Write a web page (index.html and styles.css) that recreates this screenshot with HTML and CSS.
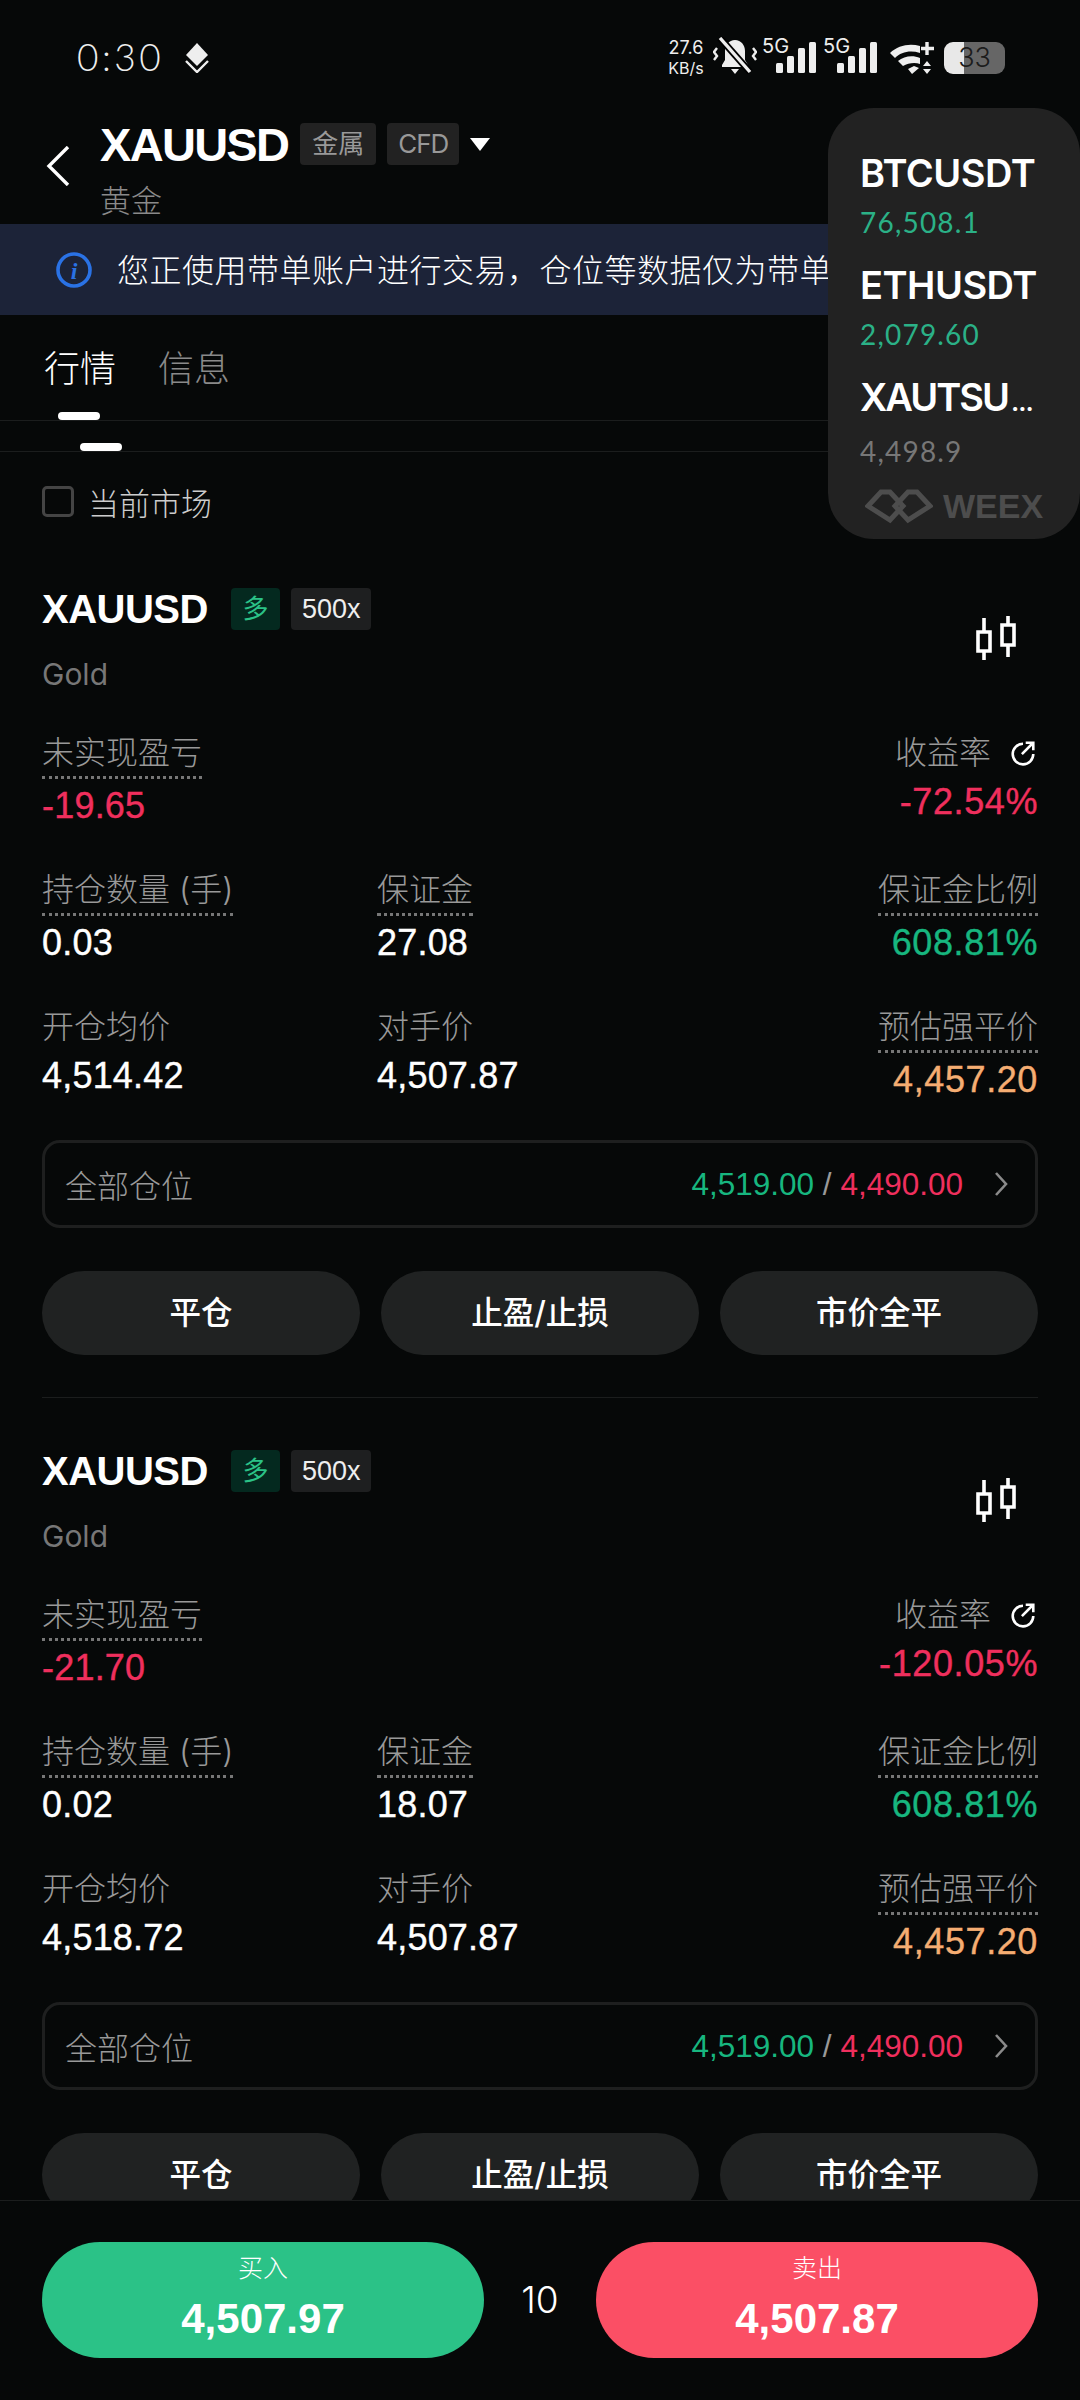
FILE: index.html
```html
<!DOCTYPE html>
<html lang="zh-CN">
<head>
  <meta charset="UTF-8">
  <meta name="viewport" content="width=device-width, initial-scale=1.0">
  <title>XAUUSD</title>
  <link rel="stylesheet" href="styles.css">
</head>
<body>

<svg class="defs" width="0" height="0">
  <symbol id="candles" viewBox="0 0 40 44">
    <path d="M2 16h12v19H2zM8 2v14M8 35v9M26 9h12v20H26zM32 0v9M32 29v12" fill="none" stroke="#fff" stroke-width="3.6"/>
  </symbol>
  <symbol id="share" viewBox="0 0 24 24">
    <path d="M12 3.500a9.500 9.500 0 1 0 9.500 9.500" fill="none" stroke="#fff" stroke-width="2.4"/>
    <path d="M11 13 20.500 3.500M14.500 2.500h7v7" fill="none" stroke="#fff" stroke-width="2.4"/>
  </symbol>
  <symbol id="chev" viewBox="0 0 14 24">
    <path d="M2 1l10 11L2 23" fill="none" stroke="#8a8a8a" stroke-width="2.6"/>
  </symbol>
  <symbol id="signal" viewBox="0 0 40 31">
    <rect x="0" y="21" width="7" height="10" rx="1.5" fill="#eee"/>
    <rect x="11" y="14" width="7" height="17" rx="1.5" fill="#eee"/>
    <rect x="22" y="6" width="7" height="25" rx="1.5" fill="#eee"/>
    <rect x="33" y="0" width="7" height="31" rx="1.5" fill="#eee"/>
  </symbol>
</svg>

<div class="status">
  <div class="status-left">
    <span class="time">0:30</span>
    <svg class="layers" viewBox="0 0 26 30">
      <path d="M13 0l11 12-11 11L2 12z" fill="#eee"/>
      <path d="M2 18l11 11 11-11" fill="none" stroke="#eee" stroke-width="2.4"/>
    </svg>
  </div>
  <div class="status-right">
    <div class="speed"><span>27.6</span><span class="unit">KB/s</span></div>
    <svg class="bell" viewBox="0 0 44 38">
      <path d="M22 3c-6 0-10 5-10 11v9l-3 5v2h26v-2l-3-5v-9c0-6-4-11-10-11zM18 32h8l-4 5z" fill="#eee"/>
      <path d="M7 1l30 34" stroke="#000" stroke-width="7"/>
      <path d="M7 1l30 34" stroke="#eee" stroke-width="3.4"/>
      <path d="M4 11l-3 4 3 4-3 4M40 11l3 4-3 4 3 4" fill="none" stroke="#eee" stroke-width="2.4"/>
    </svg>
    <div class="sim"><span class="five-g">5G</span><svg class="bars"><use href="#signal"/></svg></div>
    <div class="sim sim-two"><span class="five-g">5G</span><svg class="bars"><use href="#signal"/></svg></div>
    <svg class="wifi" viewBox="0 0 44 32">
      <path d="M0 11C8 3 20 1 30 4v7C20 8 11 10 5 16zM8 19c6-5 15-6 22-3v6c-5-2-12-1-17 2zM18 27l6-3 5 2-7 6z" fill="#eee"/>
      <path d="M37 0v13M31 6.500h13" stroke="#eee" stroke-width="3.4"/>
      <path d="M37 19l4 5h-8zM37 32l4-5h-8z" fill="#eee"/>
    </svg>
    <div class="battery"><span class="battery-num">33</span></div>
  </div>
</div>

<div class="header">
  <svg class="back" viewBox="0 0 24 40"><path d="M22 1L3 20l19 19" fill="none" stroke="#fff" stroke-width="3.4"/></svg>
  <div class="title-block">
    <div class="title-row">
      <span class="title">XAUUSD</span>
      <span class="head-tag">金属</span>
      <span class="head-tag head-latin">CFD</span>
      <span class="caret"></span>
    </div>
    <div class="subtitle">黄金</div>
  </div>
</div>

<div class="banner">
  <svg class="info" viewBox="0 0 36 36">
    <circle cx="18" cy="18" r="16" fill="none" stroke="#2a72e5" stroke-width="3.6"/>
    <text x="18" y="27" text-anchor="middle" class="info-i">i</text>
  </svg>
  <span class="banner-text">您正使用带单账户进行交易，仓位等数据仅为带单</span>
</div>

<div class="tabs">
  <div class="tab tab-on">行情<i class="tab-mark"></i></div>
  <div class="tab">信息</div>
</div>
<div class="subtabs"><i class="subtab-mark"></i></div>

<div class="scroll">
  <label class="filter"><span class="checkbox"></span>当前市场</label>

  <div class="card">
    <div class="card-head">
      <div>
        <div class="card-title"><span class="symbol">XAUUSD</span><span class="tag tag-long">多</span><span class="tag">500x</span></div>
        <div class="gold">Gold</div>
      </div>
      <svg class="candles"><use href="#candles"/></svg>
    </div>
    <div class="grid">
      <div class="cell"><span class="label dotted">未实现盈亏</span><span class="value red">-19.65</span></div>
      <div class="cell cell-end"><span class="label">收益率<svg class="share"><use href="#share"/></svg></span><span class="value red">-72.54%</span></div>
      <div class="cell"><span class="label dotted">持仓数量 (手)</span><span class="value">0.03</span></div>
      <div class="cell"><span class="label dotted">保证金</span><span class="value">27.08</span></div>
      <div class="cell cell-end"><span class="label dotted">保证金比例</span><span class="value green">608.81%</span></div>
      <div class="cell"><span class="label">开仓均价</span><span class="value">4,514.42</span></div>
      <div class="cell"><span class="label">对手价</span><span class="value">4,507.87</span></div>
      <div class="cell cell-end"><span class="label dotted">预估强平价</span><span class="value orange">4,457.20</span></div>
    </div>
    <div class="all">
      <span class="all-label">全部仓位</span>
      <span class="all-prices"><span class="green">4,519.00</span> <span class="slash">/</span> <span class="red">4,490.00</span></span>
      <svg class="chev"><use href="#chev"/></svg>
    </div>
    <div class="actions">
      <div class="action">平仓</div>
      <div class="action">止盈/止损</div>
      <div class="action">市价全平</div>
    </div>
  </div>

  <div class="card">
    <div class="card-head">
      <div>
        <div class="card-title"><span class="symbol">XAUUSD</span><span class="tag tag-long">多</span><span class="tag">500x</span></div>
        <div class="gold">Gold</div>
      </div>
      <svg class="candles"><use href="#candles"/></svg>
    </div>
    <div class="grid">
      <div class="cell"><span class="label dotted">未实现盈亏</span><span class="value red">-21.70</span></div>
      <div class="cell cell-end"><span class="label">收益率<svg class="share"><use href="#share"/></svg></span><span class="value red">-120.05%</span></div>
      <div class="cell"><span class="label dotted">持仓数量 (手)</span><span class="value">0.02</span></div>
      <div class="cell"><span class="label dotted">保证金</span><span class="value">18.07</span></div>
      <div class="cell cell-end"><span class="label dotted">保证金比例</span><span class="value green">608.81%</span></div>
      <div class="cell"><span class="label">开仓均价</span><span class="value">4,518.72</span></div>
      <div class="cell"><span class="label">对手价</span><span class="value">4,507.87</span></div>
      <div class="cell cell-end"><span class="label dotted">预估强平价</span><span class="value orange">4,457.20</span></div>
    </div>
    <div class="all">
      <span class="all-label">全部仓位</span>
      <span class="all-prices"><span class="green">4,519.00</span> <span class="slash">/</span> <span class="red">4,490.00</span></span>
      <svg class="chev"><use href="#chev"/></svg>
    </div>
    <div class="actions">
      <div class="action">平仓</div>
      <div class="action">止盈/止损</div>
      <div class="action">市价全平</div>
    </div>
  </div>
</div>

<div class="footer">
  <div class="trade trade-buy"><span class="trade-label">买入</span><span class="trade-price">4,507.97</span></div>
  <div class="lever">10</div>
  <div class="trade trade-sell"><span class="trade-label">卖出</span><span class="trade-price">4,507.87</span></div>
</div>

<div class="float">
  <div class="float-item"><div class="float-name">BTCUSDT</div><div class="float-price up">76,508.1</div></div>
  <div class="float-item"><div class="float-name">ETHUSDT</div><div class="float-price up">2,079.60</div></div>
  <div class="float-item"><div class="float-name float-cut">XAUTSU<span class="dots">...</span></div><div class="float-price">4,498.9</div></div>
  <div class="weex">
    <svg class="weex-mark" viewBox="0 0 68 36">
      <path d="M16 4H25L38 18 25 32 3 18z" fill="none" stroke="#4d4d4d" stroke-width="5"/>
      <path d="M52 4H43L30 18 43 32 65 18z" fill="none" stroke="#4d4d4d" stroke-width="5"/>
    </svg>
    <span>WEEX</span>
  </div>
</div>

</body>
</html>
```

FILE: styles.css
```css
* {
  box-sizing: border-box;
}
html, body {
  margin: 0;
  padding: 0;
}
body {
  position: relative;
  width: 1080px;
  height: 2400px;
  overflow: hidden;
  display: flex;
  flex-direction: column;
  background-color: #060808;
  color: #fff;
  font-family: Inter, "Noto Sans CJK SC", sans-serif;
}
.defs {
  position: absolute;
}

/* status bar */
.status {
  height: 108px;
  flex: none;
  display: flex;
  justify-content: space-between;
  padding: 37px 75px 0 77px;
}
.status-left {
  display: flex;
  align-items: flex-start;
  gap: 20px;
}
.time {
  font-size: 37px;
  font-weight: 300;
  line-height: 40px;
  letter-spacing: 3.5px;
  color: #eee;
  font-family: Lato, sans-serif;
}
.layers {
  width: 26px;
  height: 30px;
  margin-top: 6px;
}
.status-right {
  display: flex;
  align-items: flex-start;
  height: 40px;
  color: #eee;
}
.speed {
  display: flex;
  flex-direction: column;
  align-items: center;
  font-size: 18px;
  line-height: 21px;
  width: 36px;
}
.unit {
  font-size: 16px;
}
.bell {
  width: 44px;
  height: 38px;
  margin-left: 9px;
}
.sim {
  position: relative;
  width: 54px;
  height: 36px;
  margin-left: 5px;
}
.sim-two {
  margin-left: 7px;
}
.five-g {
  position: absolute;
  left: 0;
  top: -1px;
  font-size: 20px;
  line-height: 20px;
}
.bars {
  position: absolute;
  left: 14px;
  top: 5px;
  width: 40px;
  height: 31px;
}
.wifi {
  width: 44px;
  height: 32px;
  margin: 5px 10px 0 13px;
}
.battery {
  width: 61px;
  height: 32px;
  margin-top: 5px;
  border-radius: 9px;
  background: linear-gradient(90deg, #e8e8e8 20px, #666 20px);
  text-align: center;
}
.battery-num {
  font-size: 27px;
  line-height: 32px;
  color: #1c1c1c;
  font-weight: 300;
}

/* header */
.header {
  height: 116px;
  flex: none;
  display: flex;
  padding-left: 46px;
}
.back {
  width: 24px;
  height: 40px;
  margin-top: 38px;
}
.title-block {
  margin-left: 30px;
}
.title-row {
  display: flex;
  align-items: center;
  height: 56px;
  margin-top: 8px;
}
.title {
  font-family: "Liberation Sans", sans-serif;
  font-size: 47px;
  font-weight: 700;
  letter-spacing: -1.7px;
  margin-right: 12px;
}
.head-tag {
  height: 42px;
  padding: 0 12px;
  margin-right: 11px;
  background-color: #222;
  border-radius: 4px;
  color: #999;
  font-size: 26px;
  line-height: 42px;
}
.head-latin {
  padding: 0 11px;
  letter-spacing: -1px;
}
.caret {
  border-left: 10px solid transparent;
  border-right: 10px solid transparent;
  border-top: 13px solid #fff;
}
.subtitle {
  font-size: 31px;
  color: #8a8a8a;
  line-height: 40px;
  margin-top: 9px;
  font-weight: 300;
}

.banner {
  height: 91px;
  flex: none;
  width: 840px;
  display: flex;
  align-items: center;
  padding-left: 56px;
  background-color: #1c2338;
  overflow: hidden;
}
.info {
  width: 36px;
  height: 36px;
  flex: none;
}
.info-i {
  font-family: "Liberation Serif", serif;
  font-style: italic;
  font-weight: 700;
  font-size: 24px;
  fill: #2a72e5;
}
.banner-text {
  margin: 0 0 3px 25px;
  font-size: 32px;
  letter-spacing: 0.5px;
  font-weight: 300;
  white-space: nowrap;
}

/* tabs */
.tabs {
  height: 106px;
  flex: none;
  display: flex;
  gap: 42px;
  padding: 28px 0 0 44px;
  border-bottom: 1px solid #1b1d1d;
}
.tab {
  position: relative;
  font-size: 36px;
  line-height: 52px;
  color: #8a8a8a;
  font-weight: 300;
}
.tab-on {
  color: #fff;
}
.tab-mark {
  position: absolute;
  left: 14px;
  bottom: 0;
  width: 42px;
  height: 8px;
  border-radius: 4px;
  background-color: #fff;
}
.subtabs {
  height: 31px;
  flex: none;
  display: flex;
  align-items: flex-end;
  padding-left: 80px;
  border-bottom: 1px solid #1b1d1d;
}
.subtab-mark {
  width: 42px;
  height: 8px;
  border-radius: 4px;
  background-color: #fff;
}

.scroll {
  flex: 1;
  min-height: 0;
  overflow: hidden;
  padding: 0 42px;
}
.filter {
  display: flex;
  align-items: center;
  gap: 14px;
  height: 40px;
  margin: 29px 0 15px;
  font-size: 31px;
  color: #ccc;
  font-weight: 300;
}
.checkbox {
  width: 32px;
  height: 31px;
  border: 3px solid #444;
  border-radius: 5px;
}

/* position card */
.card {
  padding: 52px 0 42px;
  border-bottom: 1px solid #1b1d1d;
}
.card-head {
  display: flex;
  justify-content: space-between;
}
.card-title {
  display: flex;
  align-items: center;
  height: 42px;
}
.symbol {
  font-family: "Liberation Sans", sans-serif;
  font-size: 40px;
  font-weight: 700;
  letter-spacing: -0.5px;
  margin-right: 23px;
}
.tag {
  height: 42px;
  margin-right: 11px;
  padding: 0 11px;
  background-color: #1e1f20;
  border-radius: 4px;
  font-family: "Liberation Sans", "Noto Sans CJK SC", sans-serif;
  font-size: 27px;
  line-height: 42px;
  color: #eee;
}
.tag-long {
  width: 49px;
  padding: 0;
  text-align: center;
  font-size: 26px;
  background-color: #04291f;
  color: #2bc287;
}
.gold {
  margin-top: 24px;
  font-size: 30px;
  line-height: 40px;
  color: #777;
}
.candles {
  width: 40px;
  height: 44px;
  margin: 28px 22px 0 0;
}
.grid {
  display: grid;
  grid-template-columns: 335px 1fr auto;
  grid-template-rows: 137px 137px 133px;
  margin-top: 39px;
}
.cell {
  display: flex;
  flex-direction: column;
  align-items: flex-start;
}
.cell:nth-child(2) {
  grid-column: 3;
}
.cell-end {
  align-items: flex-end;
}
.label {
  display: flex;
  align-items: center;
  padding-bottom: 2px;
  font-size: 32px;
  line-height: 40px;
  color: #999;
  font-weight: 300;
}
.dotted {
  border-bottom: 3px dotted #777;
  padding-bottom: 3px;
}
.value {
  margin-top: 5px;
  font-family: "Liberation Sans", sans-serif;
  font-size: 36px;
  line-height: 44px;
  letter-spacing: 0.2px;
  -webkit-text-stroke: 0.4px;
}
.cell-end .value {
  letter-spacing: 0.6px;
}
.share {
  width: 26px;
  height: 26px;
  margin: 0 2px 0 19px;
}
.red {
  color: #ef2f5d;
}
.green {
  color: #17b67f;
}
.orange {
  color: #f5ad72;
}
.all {
  display: flex;
  align-items: center;
  height: 88px;
  padding: 0 27px 0 20px;
  border: 3px solid #1e1f1f;
  border-radius: 18px;
}
.all-label {
  font-size: 32px;
  color: #999;
  font-weight: 300;
}
.all-prices {
  margin-left: auto;
  font-family: "Liberation Sans", sans-serif;
  font-size: 31.5px;
}
.slash {
  color: #999;
}
.chev {
  width: 14px;
  height: 24px;
  margin-left: 31px;
}
.actions {
  display: flex;
  gap: 21px;
  margin-top: 43px;
}
.action {
  flex: 1;
  height: 84px;
  border-radius: 42px;
  background-color: #202222;
  text-align: center;
  font-size: 31.5px;
  font-weight: 500;
  line-height: 84px;
}

/* bottom bar */
.footer {
  height: 200px;
  flex: none;
  display: flex;
  padding: 41px 42px 0;
  border-top: 1px solid #1b1d1d;
  background-color: #060808;
}
.trade {
  width: 442px;
  height: 116px;
  border-radius: 58px;
  display: flex;
  flex-direction: column;
  align-items: center;
  padding-top: 10px;
}
.trade-buy {
  background-color: #2bc287;
}
.trade-sell {
  background-color: #fb4f65;
}
.trade-label {
  font-size: 25px;
  line-height: 32px;
  font-weight: 300;
}
.trade-price {
  font-family: "Liberation Sans", sans-serif;
  font-size: 42px;
  font-weight: 700;
  line-height: 50px;
  margin-top: 10px;
}
.lever {
  flex: 1;
  text-align: center;
  font-size: 37px;
  font-weight: 300;
  line-height: 116px;
}

/* floating watchlist */
.float {
  position: absolute;
  left: 828px;
  top: 108px;
  width: 252px;
  height: 431px;
  padding: 42px 0 0 32px;
  background-color: #222;
  border-radius: 46px;
}
.float-item {
  height: 112px;
}
.float-name {
  font-size: 38px;
  font-weight: 600;
  line-height: 46px;
  letter-spacing: -0.5px;
}
.float-cut {
  letter-spacing: -2px;
}
.dots {
  font-size: 26px;
  letter-spacing: -1px;
  margin-left: 3px;
}
.float-price {
  margin-top: 8px;
  font-family: Lato, sans-serif;
  font-size: 28px;
  line-height: 36px;
  letter-spacing: 1.2px;
  color: #777;
}
.up {
  color: #2bb187;
}
.weex {
  display: flex;
  align-items: center;
  gap: 10px;
  margin: 0 0 0 5px;
  font-family: "Liberation Sans", sans-serif;
  font-size: 34px;
  font-weight: 700;
  line-height: 40px;
  color: #4d4d4d;
}
.weex-mark {
  width: 68px;
  height: 36px;
}
```
